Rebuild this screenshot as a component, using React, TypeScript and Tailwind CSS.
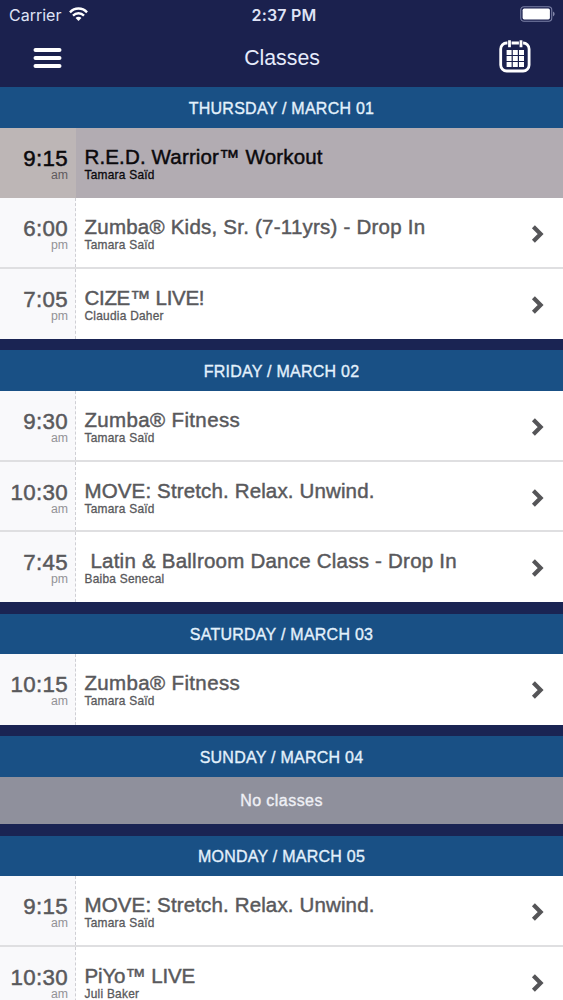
interface ClassItem {
  time: string;
  period: "am" | "pm";
  title: string;
  instructor: string;
  past?: boolean;
  tracking?: string;
}

interface Day {
  label: string;
  classes: ClassItem[];
}

const schedule: Day[] = [
  {
    label: "THURSDAY / MARCH 01",
    classes: [
      { time: "9:15", period: "am", title: "R.E.D. Warrior™ Workout", instructor: "Tamara Saïd", past: true, tracking: "tracking-[0.15px]" },
      { time: "6:00", period: "pm", title: "Zumba® Kids, Sr. (7-11yrs) - Drop In", instructor: "Tamara Saïd" },
      { time: "7:05", period: "pm", title: "CIZE™ LIVE!", instructor: "Claudia Daher", tracking: "tracking-[-0.3px]" },
    ],
  },
  {
    label: "FRIDAY / MARCH 02",
    classes: [
      { time: "9:30", period: "am", title: "Zumba® Fitness", instructor: "Tamara Saïd", tracking: "tracking-[0.35px]" },
      { time: "10:30", period: "am", title: "MOVE: Stretch. Relax. Unwind.", instructor: "Tamara Saïd", tracking: "tracking-[0.14px]" },
      { time: "7:45", period: "pm", title: " Latin & Ballroom Dance Class - Drop In", instructor: "Baiba Senecal" },
    ],
  },
  {
    label: "SATURDAY / MARCH 03",
    classes: [{ time: "10:15", period: "am", title: "Zumba® Fitness", instructor: "Tamara Saïd", tracking: "tracking-[0.35px]" }],
  },
  { label: "SUNDAY / MARCH 04", classes: [] },
  {
    label: "MONDAY / MARCH 05",
    classes: [
      { time: "9:15", period: "am", title: "MOVE: Stretch. Relax. Unwind.", instructor: "Tamara Saïd", tracking: "tracking-[0.14px]" },
      { time: "10:30", period: "am", title: "PiYo™ LIVE", instructor: "Juli Baker", tracking: "tracking-[-0.15px]" },
    ],
  },
];

function StatusBar() {
  return (
    <div className="grid h-[29px] grid-cols-3 items-center pr-[8px] pl-[9px] font-['Inter',sans-serif] text-[16px] text-[#dfe3f6]">
      <div className="flex items-center gap-[8px]">
        <span>Carrier</span>
        <svg width="19" height="15" viewBox="0 0 20 15" fill="none" stroke="#fff" strokeWidth="2.5">
          <path d="M1 5.2C6-0.1 14-0.1 19 5.2" />
          <path d="M4.2 8.6C7.5 5.3 12.5 5.3 15.8 8.6" />
          <path d="M10 14.3L6.9 11.1C8.7 9.4 11.3 9.4 13.1 11.1Z" fill="#fff" stroke="none" />
        </svg>
      </div>
      <span className="pl-1 text-center font-semibold tracking-[0.2px]">2:37 PM</span>
      <svg className="-mt-[2px] justify-self-end" width="35" height="16" viewBox="0 0 35 16">
        <rect x="0.75" y="0.75" width="31" height="14.5" rx="3.2" fill="none" stroke="#7b80a6" strokeWidth="1.1" />
        <rect x="2.6" y="2.6" width="27.3" height="10.8" rx="1.6" fill="#fff" />
        <path d="M33.2 5.6C35 6.4 35 9.6 33.2 10.4Z" fill="#9a9ebd" />
      </svg>
    </div>
  );
}

function NavBar() {
  return (
    <div className="grid h-[58.2px] grid-cols-3 items-center pr-[32px] pl-[33px]">
      <svg className="mb-[1px]" width="29" height="22" viewBox="0 0 29 22" stroke="#fff" strokeWidth="4" strokeLinecap="round">
        <path d="M2.5 3h24M2.5 11h24M2.5 19h24" />
      </svg>
      <h1 className="pt-[2px] text-center text-[21.3px] text-[#e6ebfb]">Classes</h1>
      <svg className="mb-[5px] justify-self-end" width="32" height="34" viewBox="0 0 32 34" fill="none">
        <rect x="1.7" y="4" width="28.4" height="28" rx="6" stroke="#fff" strokeWidth="2.8" />
        <path d="M10.5 1.8v6M22 1.8v6" stroke="#1b214e" strokeWidth="4.2" />
        <path d="M10.5 1.2v7M22 1.2v7" stroke="#fff" strokeWidth="2.8" />
        <path
          d="M7.6 11h5v5h-5zM13.8 11h5v5h-5zM20 11h5v5h-5zM7.6 17h5v5h-5zM13.8 17h5v5h-5zM20 17h5v5h-5zM7.6 23h5v5h-5zM13.8 23h5v5h-5zM20 23h5v5h-5z"
          fill="#fff"
        />
      </svg>
    </div>
  );
}

function ClassRow({ item }: { item: ClassItem }) {
  return (
    <div
      className={
        item.past
          ? "flex h-[70.4px] bg-[#b2acb2] text-[#0b090c]"
          : "flex h-[70.4px] border-b-2 border-[#dfdfe1] bg-white text-[#59595c] last:border-b-0"
      }
    >
      <div
        className={
          item.past
            ? "w-[76px] shrink-0 bg-[#bdb6b6] pt-[21px] pr-[8px] text-right"
            : "w-[76px] shrink-0 border-r border-dashed border-[#cfcfd4] bg-[#f9f9fb] pt-[21px] pr-[7px] text-right"
        }
      >
        <div className="text-[22.3px] leading-[20px] tracking-[0.35px] [-webkit-text-stroke:0.5px]">{item.time}</div>
        <div className={item.past ? "text-[12.3px] leading-[12px] text-[#5f5a5e]" : "text-[12.3px] leading-[12px] text-[#929296]"}>
          {item.period}
        </div>
      </div>
      <div className="min-w-0 flex-1 pt-[17px] pl-[8.5px] whitespace-pre">
        <div className={`text-[20.5px] leading-[24px] [-webkit-text-stroke:0.45px] ${item.tracking ?? "tracking-[0.23px]"}`}>
          {item.title}
        </div>
        <div className="text-[11.9px] leading-[12px] tracking-[0.25px] [-webkit-text-stroke:0.3px]">{item.instructor}</div>
      </div>
      {!item.past && (
        <svg className="mt-[26px] mr-[18px] shrink-0" width="14" height="20" viewBox="0 0 14 20" fill="none" stroke="#555558" strokeWidth="4.2">
          <path d="M2.4 2.8L9.6 10L2.4 17.2" />
        </svg>
      )}
    </div>
  );
}

function DaySection({ day }: { day: Day }) {
  return (
    <section className="mb-[11.4px]">
      <h2 className="flex h-[40.7px] items-center justify-center bg-[#195085] pt-[2px] text-[16px] tracking-[0.25px] text-[#e3f1fc] [-webkit-text-stroke:0.35px]">
        {day.label}
      </h2>
      {day.classes.length > 0 ? (
        <div>
          {day.classes.map((item) => (
            <ClassRow key={item.time + item.period} item={item} />
          ))}
        </div>
      ) : (
        <div className="flex h-[47.3px] items-center justify-center bg-[#8f909c] pt-[2px] text-[16px] tracking-[0.45px] text-[#eff0f6] [-webkit-text-stroke:0.35px]">
          No classes
        </div>
      )}
    </section>
  );
}

export default function App() {
  return (
    <div className="h-[1000px] w-[563px] overflow-hidden bg-[#1a2453] font-['Liberation_Sans',Arial,sans-serif]">
      <header className="bg-[#1b214e]">
        <StatusBar />
        <NavBar />
      </header>
      <main>
        {schedule.map((day) => (
          <DaySection key={day.label} day={day} />
        ))}
      </main>
    </div>
  );
}
